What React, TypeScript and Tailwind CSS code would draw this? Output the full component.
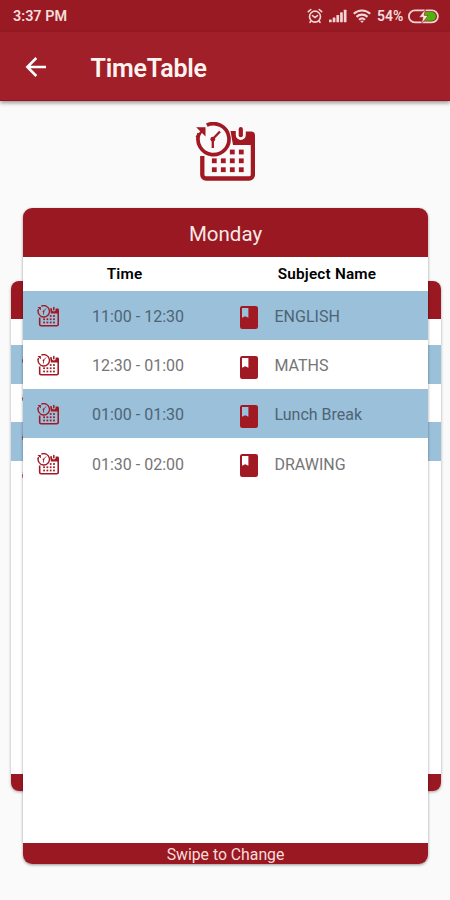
import { clsx } from 'clsx';

interface Period {
  time: string;
  subject: string;
}

const periods: Period[] = [
  { time: '11:00 - 12:30', subject: 'ENGLISH' },
  { time: '12:30 - 01:00', subject: 'MATHS' },
  { time: '01:00 - 01:30', subject: 'Lunch Break' },
  { time: '01:30 - 02:00', subject: 'DRAWING' },
];

const dotRows = [
  { y: 42, xs: [53.3, 62.3] },
  { y: 50.8, xs: [35.3, 44.3, 53.3, 62.3] },
  { y: 59.7, xs: [35.3, 44.3, 53.3, 62.3] },
];

function ScheduleIcon({ className }: { className?: string }) {
  return (
    <svg viewBox="16 12 60 60" className={className} fill="none" stroke="#a11923">
      <path d="M23.300 46v18.700a3.800 3.800 0 0 0 3.800 3.800h43a3.800 3.800 0 0 0 3.800-3.800V30" strokeWidth="4.300" />
      <path
        d="M51.500 21h5.300v4a5 5 0 0 0 10 0v-3.500h5.200a4 4 0 0 1 4 4V35H54z"
        fill="#a11923"
        stroke="none"
      />
      <path d="M61.800 19.200v6" strokeWidth="4.200" strokeLinecap="round" />
      <path d="M27.800 15.200a15.500 15.500 0 1 1-7.700 8.200" strokeWidth="3.700" />
      <path d="M17.200 17.200h9.300v9.300z" fill="#a11923" stroke="none" />
      <path d="M17.500 27.500l6.500-7.500" strokeWidth="2.500" />
      <path d="M41 21.500L33.800 29v9" strokeWidth="2.300" />
      <circle cx="33.800" cy="29.200" r="2.400" fill="#a11923" stroke="none" />
      {dotRows.map(row =>
        row.xs.map(x => (
          <rect
            key={`${x}-${row.y}`}
            x={x - 2.4}
            y={row.y - 2.4}
            width="4.800"
            height="4.800"
            fill="#a11923"
            stroke="none"
          />
        ))
      )}
    </svg>
  );
}

function BookIcon() {
  return (
    <svg viewBox="0 0 18 23" className="h-[23px] w-[18px]">
      <path
        fillRule="evenodd"
        d="M2.300 0h13.400A2.300 2.300 0 0 1 18 2.300v18.400a2.300 2.300 0 0 1-2.300 2.300H2.300A2.300 2.300 0 0 1 0 20.700V2.300A2.300 2.300 0 0 1 2.300 0zM2 2v9.700L5.200 10.200l3.200 1.500V2z"
        fill="#a11923"
      />
    </svg>
  );
}

function StatusIcons() {
  return (
    <div className="flex items-center">
      {/* Alarm */}
      <svg viewBox="0 0 16 16" className="h-4 w-4" fill="none" stroke="#f5d5d4" strokeWidth="1.600" strokeLinecap="round">
        <circle cx="8" cy="8.600" r="5.500" />
        <path d="M1.300 3.700l2.500-2.200M14.700 3.700l-2.500-2.200M5.500 7.600L8 9.600l2.500-2M4 13l-1 1.300M12 13l1 1.300" />
      </svg>
      {/* Signal */}
      <svg viewBox="0 0 18 14" className="ml-[6px] h-[14px] w-[18px]" fill="#f5d5d4">
        <rect x="0" y="10.500" width="2.700" height="2.800" rx="0.600" />
        <rect x="3.700" y="8.500" width="2.700" height="4.800" rx="0.600" />
        <rect x="7.400" y="6" width="2.700" height="7.300" rx="0.600" />
        <rect x="11.100" y="3.300" width="2.700" height="10" rx="0.600" />
        <rect x="14.800" y="0.700" width="2.700" height="12.600" rx="0.600" />
      </svg>
      {/* Wifi */}
      <svg viewBox="0 0 18 14" className="ml-[6px] h-[14px] w-[18px]" fill="none" stroke="#f5d5d4" strokeWidth="2.200">
        <path d="M0.800 4.800a11.800 11.800 0 0 1 16.400 0" />
        <path d="M3.500 7.900a8 8 0 0 1 11 0" />
        <path d="M6 10.700a4.500 4.500 0 0 1 6 0" />
        <path d="M7 11.700h4l-2 2.300z" fill="#f5d5d4" stroke="none" />
      </svg>
      <span className="ml-[6px] w-[29px] pt-px text-[14px] font-semibold whitespace-nowrap text-[#f5dedc]">54%</span>
      {/* Battery */}
      <svg viewBox="0 0 31 15" className="ml-[2px] h-[15px] w-[31px]">
        <rect x="0.900" y="1.400" width="29" height="12" rx="6" fill="none" stroke="#f5d5d4" strokeWidth="1.800" />
        <path d="M17 3h6.500a4.400 4.400 0 0 1 0 8.800h-9.500z" fill="#4cb50c" />
        <path d="M17.500 0L11 8.300h4L13.500 15l6.700-8.600h-4z" fill="#fbe6e4" stroke="#a11923" strokeWidth="0.600" />
      </svg>
    </div>
  );
}

function BackCard() {
  return (
    <div className="col-start-1 row-start-1 mr-[9.500px] ml-[10.500px] mt-[73px] flex h-[510px] flex-col overflow-hidden rounded-[8px] bg-white shadow-[0_1px_3px_rgba(0,0,0,0.35)]">
      <div className="h-[38px] shrink-0 bg-[#991821]" />
      <div className="h-[26px] shrink-0" />
      {periods.map((period, i) => (
        <div
          key={period.time}
          className={clsx('flex h-[38.500px] shrink-0 items-center pl-[11px]', i % 2 === 0 && 'bg-[#9ac0da]')}
        >
          <ScheduleIcon className="h-[17px] w-[17px]" />
        </div>
      ))}
      <div className="mt-auto h-[17px] shrink-0 bg-[#991821]" />
    </div>
  );
}

function DayCard() {
  return (
    <div className="z-10 col-start-1 row-start-1 mr-[22px] ml-[23px] flex h-[656px] flex-col overflow-hidden rounded-[9px] bg-white shadow-[0_1px_3px_rgba(0,0,0,0.4)]">
      <div className="flex h-[49px] shrink-0 items-center justify-center bg-[#991821] pt-[3px] text-[20.500px] text-[#f8e9e8]">
        Monday
      </div>
      <div className="flex h-[33.500px] shrink-0 items-center pt-[2px] text-[15.300px] font-semibold text-black">
        <span className="w-[203px] text-center tracking-[0.2px]">Time</span>
        <span className="w-[202px] text-center tracking-[0.2px]">Subject Name</span>
      </div>
      {periods.map((period, i) => (
        <div
          key={period.time}
          className={clsx(
            'flex h-[49.300px] shrink-0 items-center text-[16px]',
            i % 2 === 0 ? 'bg-[#9ac0da] text-[#4e6475]' : 'text-[#757575]'
          )}
        >
          <ScheduleIcon className="mt-px ml-[14px] h-[22px] w-[22px]" />
          <span className="ml-[33px] w-[148px] pt-[3px]">{period.time}</span>
          <span className="mt-[5.500px]">
            <BookIcon />
          </span>
          <span className="ml-[16.500px] pt-[3px]">{period.subject}</span>
        </div>
      ))}
      <div className="mt-auto flex h-[21.500px] shrink-0 items-center justify-center bg-[#991821] pt-[3px] text-[15.800px] text-[#f8dddb]">
        Swipe to Change
      </div>
    </div>
  );
}

export default function App() {
  return (
    <div className="flex h-[900px] w-[450px] flex-col overflow-hidden bg-[#fafafa] font-[Roboto,sans-serif]">
      <div className="flex h-8 shrink-0 items-center justify-between bg-[#991a23] pr-[11px] pl-[13px]">
        <span className="pt-[2px] text-[14.400px] font-semibold text-[#f5dedc]">3:37 PM</span>
        <StatusIcons />
      </div>

      <header className="z-10 flex h-[69px] shrink-0 items-center border-b border-[#98121c] bg-[#a01f28] pl-[25px] shadow-[0_2px_4px_rgba(0,0,0,0.4)]">
        <svg viewBox="0 0 22 22" className="mt-[2px] h-[22px] w-[22px]" fill="none" stroke="#fff" strokeWidth="2.500">
          <path d="M21 11H2.500M11.300 2L2.300 11l9 9" />
        </svg>
        <h1 className="ml-[43.500px] pt-[5px] text-[25px] font-semibold tracking-[-0.2px] text-[#fff3f1]">TimeTable</h1>
      </header>

      <div className="mt-[21px] flex h-[60px] shrink-0 justify-center">
        <ScheduleIcon className="h-[60px] w-[60px]" />
      </div>

      <main className="mt-[26px] grid">
        <BackCard />
        <DayCard />
      </main>
    </div>
  );
}
